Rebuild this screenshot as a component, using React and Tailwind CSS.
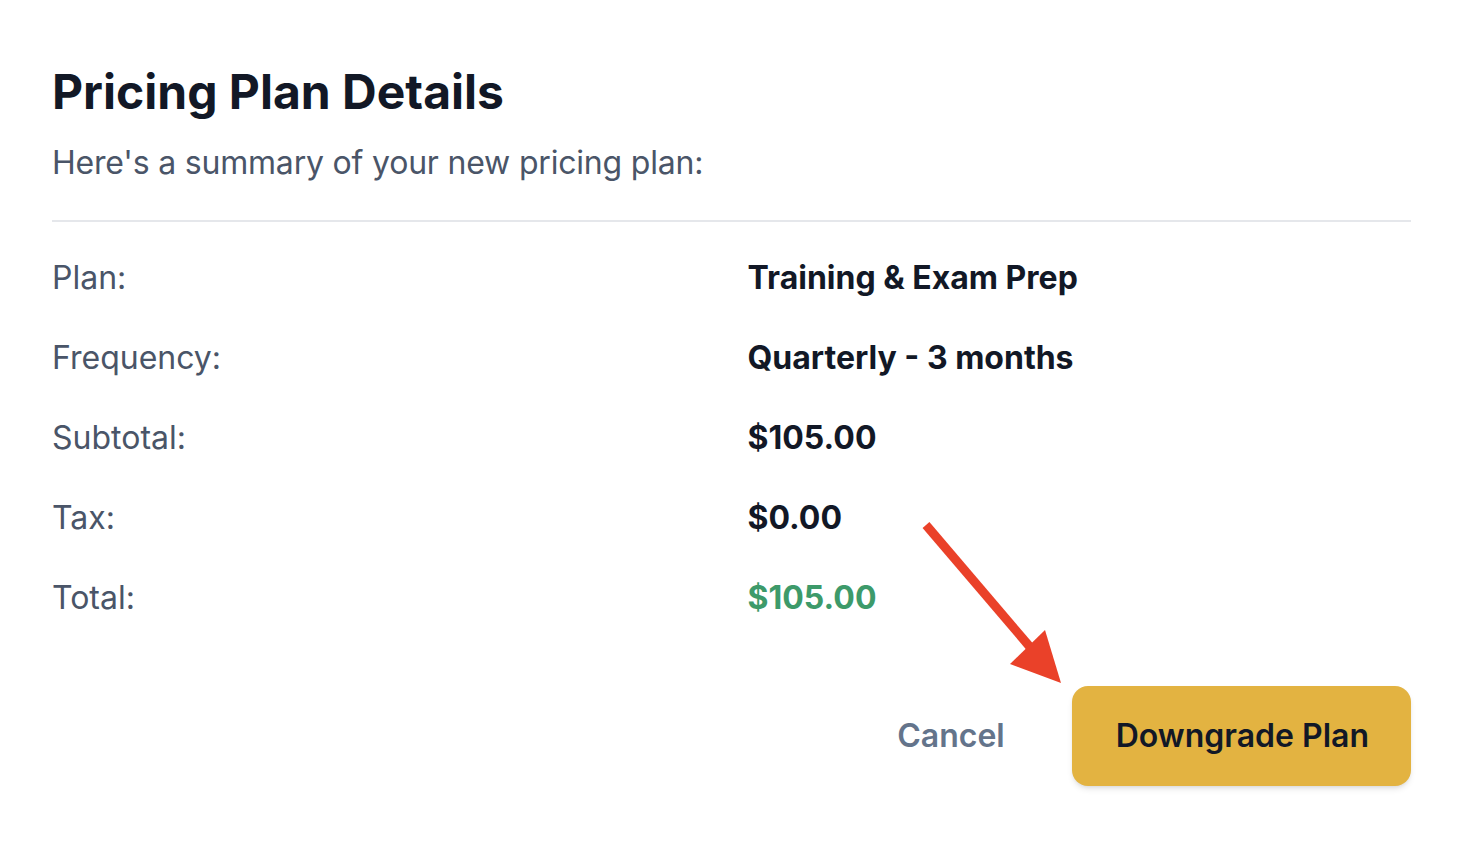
const rows = [
  { label: 'Plan:', value: 'Training & Exam Prep' },
  { label: 'Frequency:', value: 'Quarterly - 3 months' },
  { label: 'Subtotal:', value: '$105.00' },
  { label: 'Tax:', value: '$0.00' },
  { label: 'Total:', value: '$105.00', green: true },
];

const App = () => {
  return (
    <div
      className="relative min-h-[846px] bg-white px-[52px] pt-[62px] pr-[55px]"
      style={{ fontFamily: 'Inter, "Noto Sans", sans-serif' }}
    >
      <h1 className="text-[48px] leading-[60px] font-bold text-[#121826]">Pricing Plan Details</h1>
      <p className="mt-[17px] text-[32px] leading-[48px] text-[#4a5568] tracking-[-0.2px]">Here's a summary of your new pricing plan:</p>

      <div className="mt-[33px] h-[2px] bg-[#e5e7eb]" />

      <div className="grid grid-cols-2 gap-x-[32px] gap-y-[32px] pt-[32px]">
        {rows.map((row) => (
          <div key={row.label} className="contents">
            <div className="text-[32px] leading-[48px] text-[#4a5568]">{row.label}</div>
            <div
              className={`text-[32px] leading-[48px] font-bold ${row.green ? 'text-[#3d9a6a]' : 'text-[#121826]'}`}
            >
              {row.value}
            </div>
          </div>
        ))}
      </div>

      <div className="mt-[64px] flex items-center justify-end gap-[67px]">
        <button className="text-[32px] font-semibold text-[#64748b]">Cancel</button>
        <button className="h-[100px] rounded-[16px] bg-[#e3b341] pl-[44px] pr-[42px] text-[32px] font-semibold text-[#121826] shadow-md">
          Downgrade Plan
        </button>
      </div>

      {/* annotation arrow */}
      <svg className="pointer-events-none absolute left-0 top-0" width="1466" height="846">
        <line x1="926" y1="525" x2="1030" y2="647" stroke="#ea4129" strokeWidth="9" />
        <polygon points="1045,630 1010,664 1061,683" fill="#ea4129" />
      </svg>
    </div>
  );
};

export default App;
